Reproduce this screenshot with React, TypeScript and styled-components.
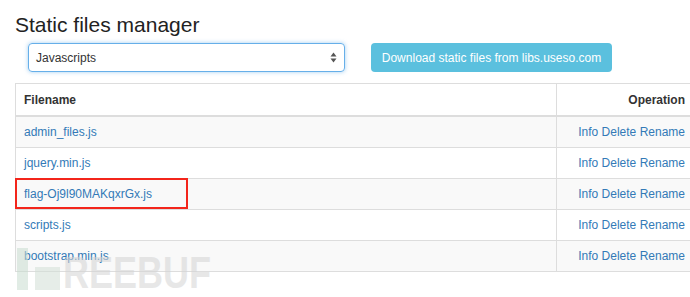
import React from "react";
import styled, { createGlobalStyle } from "styled-components";

const Global = createGlobalStyle`
  html, body { margin: 0; padding: 0; background: #fff; overflow: hidden; }
  body { font-family: "Liberation Sans", Arial, sans-serif; color: #333; }
`;

const Page = styled.div`
  position: relative;
  width: 690px;
  height: 297px;
  overflow: hidden;
  padding-top: 13px;
  box-sizing: border-box;
`;

const Title = styled.h1`
  margin: 0 0 0 15px;
  font-size: 21px;
  line-height: 23px;
  font-weight: 400;
  color: #222;
`;

const Toolbar = styled.div`
  display: flex;
  align-items: center;
  gap: 26px;
  margin: 7px 0 0 28px;
`;

const Select = styled.div`
  width: 317px;
  height: 29px;
  box-sizing: border-box;
  border: 1px solid #66afe9;
  border-radius: 4px;
  box-shadow: 0 0 4px rgba(102, 175, 233, 0.6);
  display: flex;
  align-items: center;
  justify-content: space-between;
  padding: 0 7px 0 7px;
  font-size: 12px;
  color: #333;
`;

const Button = styled.div`
  width: 241px;
  height: 29px;
  box-sizing: border-box;
  background: #5bc0de;
  border-radius: 4px;
  color: #fff;
  font-size: 12px;
  display: flex;
  align-items: center;
  justify-content: center;
`;

const TableWrap = styled.div`
  margin: 11px 0 0 15px;
  width: 679px;
`;

const Table = styled.table`
  width: 679px;
  border-collapse: collapse;
  font-size: 12px;
`;

const Th = styled.th<{ $right?: boolean }>`
  text-align: ${(p) => (p.$right ? "right" : "left")};
  width: ${(p) => (p.$right ? "120px" : "auto")};
  font-weight: 700;
  color: #333;
  padding: 9px 8px 8px;
  line-height: 14px;
  border: 1px solid #ddd;
  border-bottom: 2px solid #ddd;
`;

const Row = styled.tr<{ $striped?: boolean }>`
  background: ${(p) => (p.$striped ? "#f9f9f9" : "#fff")};
`;

const Td = styled.td<{ $right?: boolean }>`
  position: relative;
  text-align: ${(p) => (p.$right ? "right" : "left")};
  padding: 8px;
  line-height: 14px;
  border: 1px solid #ddd;
  white-space: nowrap;
`;

const Link = styled.a`
  color: #337ab7;
  text-decoration: none;
`;

const Highlight = styled.div`
  position: absolute;
  left: -1px;
  top: -1px;
  width: 173px;
  height: 31px;
  box-sizing: border-box;
  border: 2px solid #f3251b;
  pointer-events: none;
`;

const Watermark = styled.div`
  position: absolute;
  left: 17px;
  top: 248px;
  display: flex;
  align-items: flex-end;
  pointer-events: none;
  opacity: 0.55;
`;

const WatermarkText = styled.span`
  font-family: "Liberation Sans", Arial, sans-serif;
  font-weight: 700;
  font-size: 45px;
  line-height: 34px;
  color: #d4d4d4;
  display: inline-block;
  transform: scaleX(0.8);
  transform-origin: left bottom;
  margin-left: 2px;
`;

const files = [
  "admin_files.js",
  "jquery.min.js",
  "flag-Oj9l90MAKqxrGx.js",
  "scripts.js",
  "bootstrap.min.js",
];

export default function App() {
  return (
    <Page>
      <Global />
      <Title>Static files manager</Title>
      <Toolbar>
        <Select>
          <span>Javascripts</span>
          <svg width="7" height="11" viewBox="0 0 7 11">
            <path d="M3.5 0.5 L6.5 4.5 L0.5 4.5 Z" fill="#555" />
            <path d="M3.5 10.5 L6.5 6.5 L0.5 6.5 Z" fill="#555" />
          </svg>
        </Select>
        <Button>Download static files from libs.useso.com</Button>
      </Toolbar>
      <TableWrap>
        <Table>
          <thead>
            <tr>
              <Th>Filename</Th>
              <Th $right>Operation</Th>
            </tr>
          </thead>
          <tbody>
            {files.map((f, i) => (
              <Row key={f} $striped={i % 2 === 0}>
                <Td>
                  <Link href="#">{f}</Link>
                  {f.startsWith("flag") && <Highlight />}
                </Td>
                <Td $right>
                  <Link href="#">Info</Link> <Link href="#">Delete</Link>{" "}
                  <Link href="#">Rename</Link>
                </Td>
              </Row>
            ))}
          </tbody>
        </Table>
      </TableWrap>
      <Watermark>
        <svg width="44" height="42" viewBox="0 0 44 42">
          <rect x="0" y="0" width="11" height="42" fill="#c9ddd0" />
          <rect x="18" y="19" width="25" height="23" fill="#d3e0d7" />
        </svg>
        <WatermarkText>REEBUF</WatermarkText>
      </Watermark>
    </Page>
  );
}
